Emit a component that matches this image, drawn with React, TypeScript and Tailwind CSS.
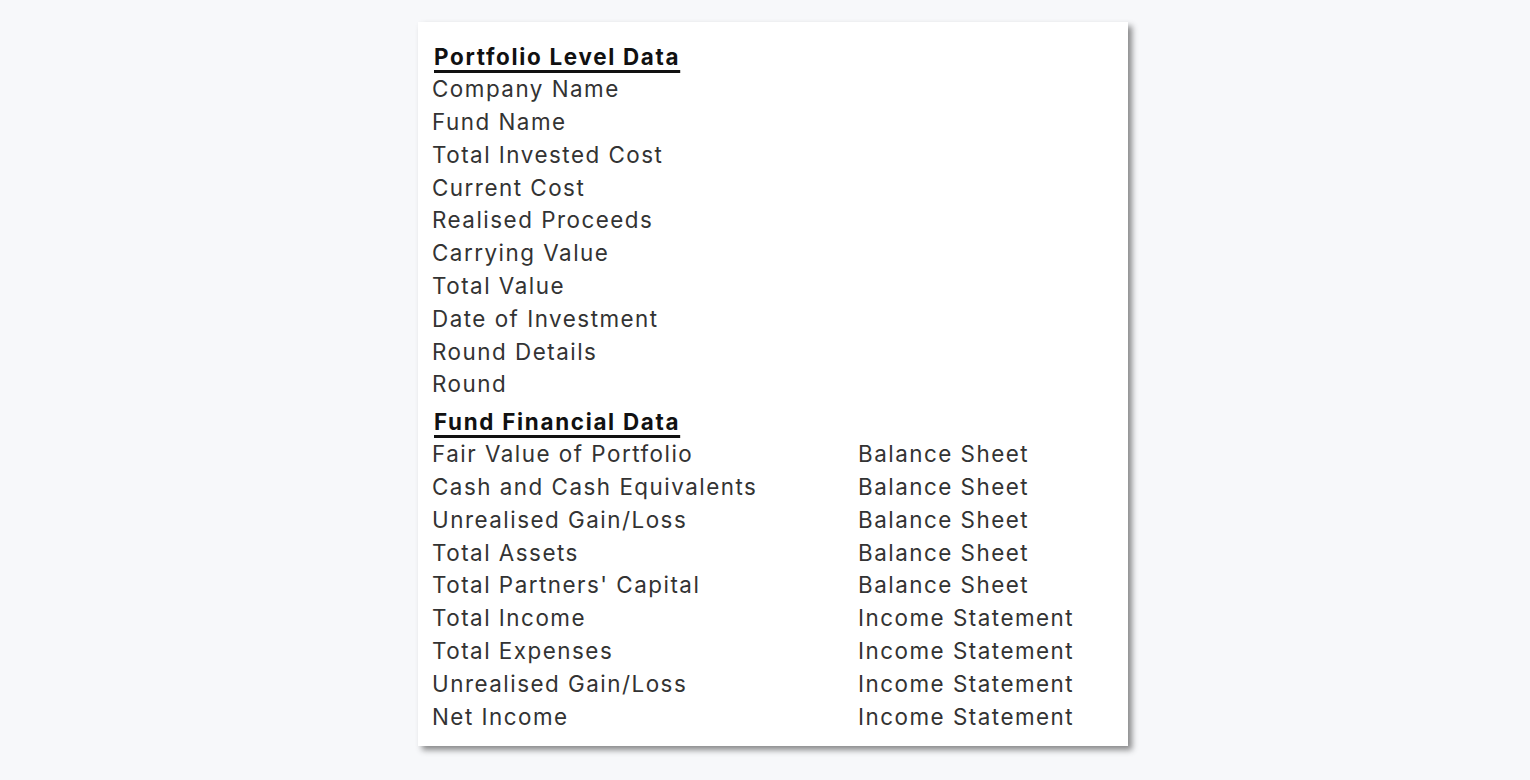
const portfolio = [
  "Company Name",
  "Fund Name",
  "Total Invested Cost",
  "Current Cost",
  "Realised Proceeds",
  "Carrying Value",
  "Total Value",
  "Date of Investment",
  "Round Details",
  "Round",
]

const financial: [string, string][] = [
  ["Fair Value of Portfolio", "Balance Sheet"],
  ["Cash and Cash Equivalents", "Balance Sheet"],
  ["Unrealised Gain/Loss", "Balance Sheet"],
  ["Total Assets", "Balance Sheet"],
  ["Total Partners' Capital", "Balance Sheet"],
  ["Total Income", "Income Statement"],
  ["Total Expenses", "Income Statement"],
  ["Unrealised Gain/Loss", "Income Statement"],
  ["Net Income", "Income Statement"],
]

function Heading({ children }: { children: string }) {
  return (
    <div className="h-[31.2px] flex items-center pl-[2px]">
      <span className="font-bold text-[#111] tracking-[1.7px] underline decoration-[2.5px] underline-offset-[5px]">
        {children}
      </span>
    </div>
  )
}

export default function App() {
  return (
    <div
      className="min-h-[780px] w-full bg-[#f7f8fa] pt-[22px] pl-[418px]"
      style={{ fontFamily: "Inter, 'Open Sans', sans-serif" }}
    >
      <div className="w-[710px] h-[724px] bg-white shadow-[4px_4px_6px_rgba(0,0,0,0.45)] pt-[19.4px] pl-[14px] text-[22.4px] tracking-[1.5px] text-[#333]">
        <Heading>Portfolio Level Data</Heading>
        {portfolio.map((p) => (
          <div key={p} className="h-[32.8px] flex items-center">
            {p}
          </div>
        ))}
        <div className="h-[5.4px]" />
        <Heading>Fund Financial Data</Heading>
        {financial.map(([a, b], i) => (
          <div key={i} className="h-[32.8px] grid grid-cols-[426px_1fr] items-center">
            <span>{a}</span>
            <span>{b}</span>
          </div>
        ))}
      </div>
    </div>
  )
}
